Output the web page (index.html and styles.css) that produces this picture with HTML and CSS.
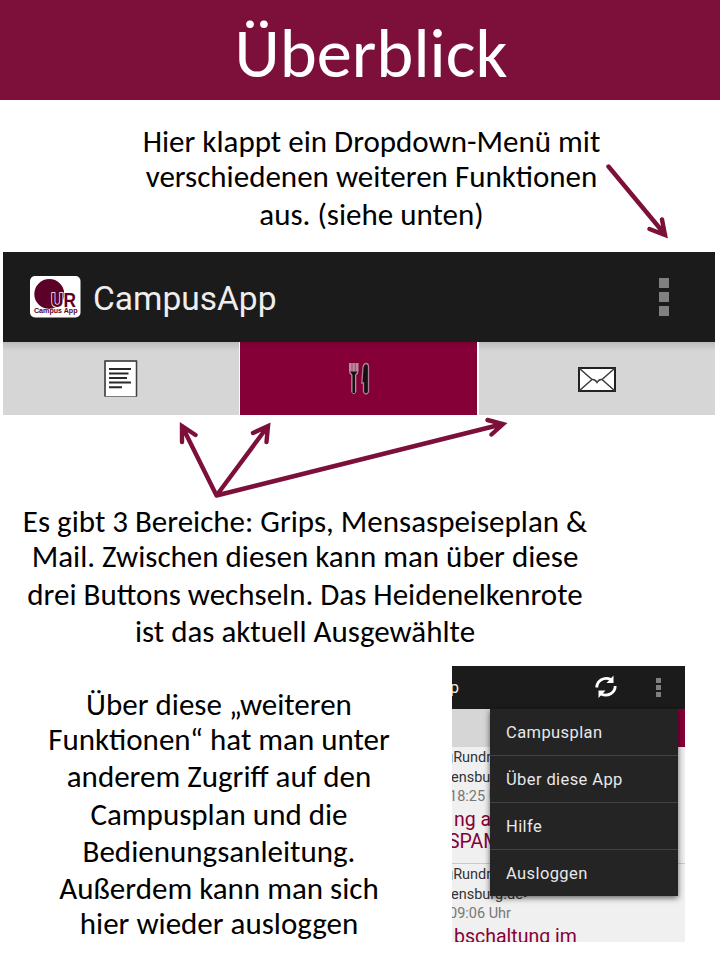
FILE: index.html
```html
<!DOCTYPE html>
<html lang="de">
<head>
<meta charset="utf-8">
<title>Überblick</title>
<link rel="stylesheet" href="styles.css">
</head>
<body>
<main class="page">
<header class="title"><h1>Überblick</h1></header>
<p class="note note-menu"><span>Hier klappt ein Dropdown-Menü mit</span><span>verschiedenen weiteren Funktionen</span><span class="gap-l">aus. (siehe unten)</span></p>
<section class="app">
<div class="bar">
<svg class="logo" width="51" height="42" viewBox="0 0 51 42"><rect width="50.500" height="41.500" rx="5" fill="#fff"/><circle cx="19.300" cy="18" r="15" fill="#5c0028"/><text x="21" y="31" class="ur-edge" textLength="25" lengthAdjust="spacingAndGlyphs">UR</text><text x="4" y="36.800" class="ca" textLength="43.500" lengthAdjust="spacingAndGlyphs">Campus App</text></svg>
<span class="name">CampusApp</span>
<span class="dots"><i></i><i></i><i></i></span>
</div>
<nav class="tabs">
<div class="tab"><svg width="34" height="38" viewBox="0 0 34 38"><path d="M1 1H32.500V36.500H1Z" fill="#fff" stroke="#777c77"/><path d="M1 36.500V1H32.500V36.500" fill="none" stroke="#3b423b" stroke-width="1.500"/><path d="M5 9H27M5 18H23M5 22.500H27M5 27.300H18M5 13.500H24.500" stroke="#292929" stroke-width="2.100" fill="none"/></svg></div>
<div class="tab active"><svg width="22" height="34" viewBox="0 0 22 34"><path d="M1 1H10.500V9Q10.500 12 8.300 13V30Q5.700 34 3.200 30V13Q1 12 1 9Z" fill="#b98da0"/><path d="M2 9.500H9.500L7 13V31H4.500V13Z" fill="#111"/><path d="M4 1V9M7.300 1V9" stroke="#85314f" stroke-width=".7"/><path d="M15 5Q16 1.500 18 1.500Q20.500 1.500 20.500 5V30Q18 34 15.500 30V21H13.800Z" fill="#161014" stroke="#ad8094" stroke-width="1.300"/></svg></div>
<div class="tab"><svg width="38" height="25" viewBox="0 0 38 25"><path d="M1 1H37V24H1Z" fill="#fff" stroke="#222" stroke-width="2"/><path d="M1 1L14 12.500Q17 12 19 15.500Q21 12 24 12.500L37 1M1 24L14 12.500M37 24L24 12.500" fill="none" stroke="#3a3a3a" stroke-width="1.500"/></svg></div>
</nav>
</section>
<p class="note note-tabs"><span>Es gibt 3 Bereiche: Grips, Mensaspeiseplan &amp;</span><span>Mail. Zwischen diesen kann man über diese</span><span class="gap-l">drei Buttons wechseln. Das Heidenelkenrote</span><span class="gap-m">ist das aktuell Ausgewählte</span></p>
<section class="lower">
<p class="note note-more"><span>Über diese „weiteren</span><span>Funktionen“ hat man unter</span><span class="gap-m">anderem Zugriff auf den</span><span class="gap-l">Campusplan und die</span><span class="gap-m">Bedienungsanleitung.</span><span class="gap-m">Außerdem kann man sich</span><span>hier wieder ausloggen</span></p>
<div class="phone">
<div class="pbar"><span>p</span>
<svg class="sync" width="22" height="24" viewBox="0 0 22 24" fill="none" stroke="#fff" stroke-width="2.800"><path d="M1.800 12.500C1.800 5.500 9 1.500 16 4.500M20.200 11C20.200 18 13 22 6 19"/><path d="M18.500 .5V8H11.500ZM3.500 23V15.500H10.500Z" fill="#fff" stroke="none"/></svg>
<span class="dots small"><i></i><i></i><i></i></span></div>
<div class="strip"></div>
<div class="mail"><div class="from c1">gRundr</div><div class="from c2">ensbu</div><div class="date">18:25 U</div><div class="subj s1">ng a</div><div class="subj s2">SPAM</div></div>
<div class="mail"><div class="from c1">gRundr</div><div class="from c2">ensburg.de&gt;</div><div class="date">09:06 Uhr</div><div class="subj s1">bschaltung im</div></div>
<div class="menu"><div>Campusplan</div><div>Über diese App</div><div>Hilfe</div><div>Ausloggen</div></div>
</div>
</section>
<svg class="arrows" width="720" height="963" viewBox="0 0 720 963"><path d="M608.500 166.500L665 234.500M649.500 229L665 235L662 219.500M216.500 495.500L182 426M182 442L182 426L195.500 435M216.500 495.500L268 426M253 433L268 426L266.500 442M216.500 495.500L503 424M487.500 420L503 424L491.500 434.500"/></svg>
</main>
</body>
</html>
```
FILE: styles.css
```css
body{margin:0;background:#fff;color:#000;font-family:Calibri,Carlito,Lato,sans-serif}
.page{position:relative;width:720px;height:963px;overflow:hidden}
.title{height:100px;background:#7d103b;color:#fff}
h1{margin:0;padding:4px 0 0 22px;text-align:center;font-weight:400;font-size:70.500px;line-height:99px}
.note{margin:0;font-size:31px;line-height:35px;text-align:center}
.note span{display:block;white-space:nowrap}
.note .gap-l{margin-top:3px}
.note .gap-m{margin-top:2px}
.note-menu{box-sizing:border-box;padding:24px 0 0 23px;height:152px}
.app{width:712px;margin-left:3px;font-family:Roboto,sans-serif}
.bar{height:90px;background:#1b1b1b;display:flex;align-items:center;padding:0 46px 0 27px;box-sizing:border-box;color:#eee}
.name{font-size:33.5px;margin-left:12px;flex:1;padding-top:3px}
.logo{flex:none}
.ur-edge{font:900 19.5px "Liberation Sans",sans-serif;fill:#5c0028;stroke:#fff;stroke-width:1.6px;paint-order:stroke}
.ca{font:bold 7.2px "Liberation Sans",sans-serif;fill:#5c0028;stroke:#fff;stroke-width:.6px;paint-order:stroke}
.dots{display:flex;flex-direction:column;gap:4px}
.dots i{width:10px;height:10px;background:#808080}
.tabs{display:grid;grid-template-columns:235.500px 237px 236.500px;column-gap:1.5px;height:72.500px}
.tab{display:flex;align-items:center;justify-content:center;background:linear-gradient(#bcbcbc,#d6d6d6 9px)}
.tab svg{position:relative;top:1px}
.tab.active{background:linear-gradient(#760030,#860038 5px)}
.note-tabs{width:610px;padding-top:89.500px}
.lower{display:flex;padding-top:17px}
.note-more{width:438px;padding-top:21px}
.phone{position:relative;width:233px;height:276px;margin-left:14px;overflow:hidden;background:#f0f0f0;font-family:Roboto,sans-serif;white-space:nowrap}
.pbar{height:43px;background:#1b1b1b;display:flex;align-items:center;color:#eee;font-size:16px}
.pbar>span:first-child{width:142px;margin-left:-2px}
.sync{margin-left:3px;margin-top:-1px}
.dots.small{gap:2px;margin-left:39px;margin-top:-1px}
.dots.small i{width:5px;height:5px}
.strip{height:38px;background:linear-gradient(90deg,#d6d6d6 190px,#860038 190px)}
.mail{box-sizing:border-box;height:117px;padding-top:1px;border-bottom:1px solid #c8c8c8;color:#333;font-size:14.5px}
.from,.date{line-height:19.5px}
.date{color:#777;margin-left:-3px}
.subj{color:#860038;font-size:19.5px;line-height:22.5px}
.date+.subj{margin-top:2px}
.c1{margin-left:-7px}
.c2{margin-left:-1px}
.s1{margin-left:2px}
.s2{margin-left:-4px}
.menu{position:absolute;left:38px;top:43px;width:188px;background:#242424;color:#e8e8e8;font-size:16.500px;box-shadow:0 2px 6px #0009}
.menu div{height:46px;line-height:47px;padding-left:16px;border-bottom:1px solid #424242;letter-spacing:.4px}
.menu div:last-child{border:0;height:46px}
.arrows{position:absolute;left:0;top:0;fill:none;stroke:#7d103b;stroke-width:4.400px;stroke-linecap:round;pointer-events:none}
```
